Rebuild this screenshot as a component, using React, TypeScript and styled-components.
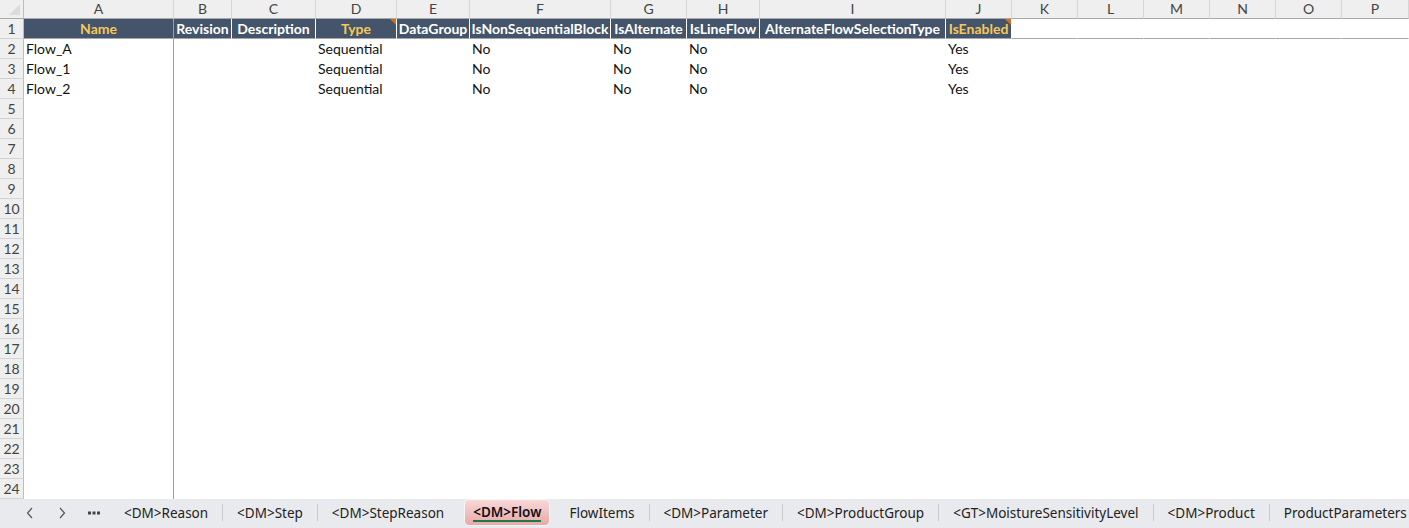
import React from "react";
import styled, { createGlobalStyle, css } from "styled-components";

const Global = createGlobalStyle`
  html, body { margin: 0; padding: 0; background: #fff; overflow: hidden; }
  #root { width: 1409px; height: 528px; }
`;

const COLS = [
  { l: "A", w: 150 },
  { l: "B", w: 58 },
  { l: "C", w: 84 },
  { l: "D", w: 81 },
  { l: "E", w: 73 },
  { l: "F", w: 141 },
  { l: "G", w: 76 },
  { l: "H", w: 73 },
  { l: "I", w: 186 },
  { l: "J", w: 66 },
  { l: "K", w: 66 },
  { l: "L", w: 66 },
  { l: "M", w: 66 },
  { l: "N", w: 66 },
  { l: "O", w: 66 },
  { l: "P", w: 67 },
];

const HEADERS: { t: string; gold?: boolean; note?: boolean }[] = [
  { t: "Name", gold: true },
  { t: "Revision" },
  { t: "Description" },
  { t: "Type", gold: true, note: true },
  { t: "DataGroup" },
  { t: "IsNonSequentialBlock" },
  { t: "IsAlternate" },
  { t: "IsLineFlow" },
  { t: "AlternateFlowSelectionType" },
  { t: "IsEnabled", gold: true, note: true },
];

const DATA: string[][] = [
  ["Flow_A", "", "", "Sequential", "", "No", "No", "No", "", "Yes"],
  ["Flow_1", "", "", "Sequential", "", "No", "No", "No", "", "Yes"],
  ["Flow_2", "", "", "Sequential", "", "No", "No", "No", "", "Yes"],
];

const TABS = [
  "<DM>Reason",
  "<DM>Step",
  "<DM>StepReason",
  "<DM>Flow",
  "FlowItems",
  "<DM>Parameter",
  "<DM>ProductGroup",
  "<GT>MoistureSensitivityLevel",
  "<DM>Product",
  "ProductParameters",
];
const ACTIVE = 3;

const Page = styled.div`
  width: 1409px;
  height: 528px;
  display: flex;
  flex-direction: column;
  font-family: "Lato", "Liberation Sans", sans-serif;
  overflow: hidden;
`;

const Sheet = styled.div`
  display: grid;
  grid-template-columns: 24px ${COLS.map((c) => c.w + "px").join(" ")};
  grid-template-rows: 19px repeat(24, 20px);
  flex: 0 0 499px;
  overflow: hidden;
`;

const Corner = styled.div`
  background: #efefef;
  border-right: 1px solid #bdbdbd;
  border-bottom: 1px solid #a9a9a9;
  box-sizing: border-box;
  position: relative;
  &::after {
    content: "";
    position: absolute;
    right: 3px;
    bottom: 3px;
    width: 0;
    height: 0;
    border-left: 11px solid transparent;
    border-bottom: 11px solid #dcdcdc;
  }
`;

const ColHead = styled.div`
  background: #efefef;
  box-sizing: border-box;
  border-right: 1px solid #d6d6d6;
  border-bottom: 1px solid #a9a9a9;
  color: #444;
  font-size: 14px;
  line-height: 18px;
  text-align: center;
`;

const RowHead = styled.div`
  background: #efefef;
  box-sizing: border-box;
  border-right: 1px solid #bdbdbd;
  border-bottom: 1px solid #d4d4d4;
  color: #444;
  font-size: 14px;
  line-height: 19px;
  text-align: center;
`;

const HeadCell = styled.div<{ $filled: boolean; $gold?: boolean; $note?: boolean; $freeze?: boolean }>`
  box-sizing: border-box;
  position: relative;
  border-bottom: 1px solid #a6a6a6;
  border-right: 1px solid ${(p) => (p.$freeze ? "#9e9e9e" : p.$filled ? "#ffffff" : "transparent")};
  background: ${(p) => (p.$filled ? "#44546a" : "#ffffff")};
  color: ${(p) => (p.$gold ? "#f6c857" : "#ffffff")};
  font-weight: 700;
  font-size: 14px;
  line-height: 19px;
  text-align: center;
  white-space: nowrap;
  overflow: hidden;
  ${(p) =>
    p.$note &&
    css`
      &::after {
        content: "";
        position: absolute;
        top: 0;
        right: 0;
        width: 0;
        height: 0;
        border-left: 6px solid transparent;
        border-top: 6px solid #d86b16;
      }
    `}
`;

const DataCell = styled.div<{ $freeze?: boolean }>`
  box-sizing: border-box;
  border-right: 1px solid ${(p) => (p.$freeze ? "#9e9e9e" : "transparent")};
  color: #111;
  font-size: 14px;
  line-height: 20px;
  padding-left: 2px;
  white-space: nowrap;
  overflow: visible;
`;

const TabBar = styled.div`
  flex: 1;
  display: flex;
  align-items: center;
  background: #e9eaed;
  padding: 0 0 2px 14px;
  font-family: "Noto Sans", "Open Sans", sans-serif;
  font-size: 13.5px;
  color: #222;
  white-space: nowrap;
  overflow: hidden;
  & > * {
    flex-shrink: 0;
  }
`;

const NavBtn = styled.div`
  width: 32px;
  height: 27px;
  display: flex;
  align-items: center;
  justify-content: center;
  color: #555;
`;

const Tab = styled.div<{ $active?: boolean }>`
  height: 27px;
  display: flex;
  align-items: center;
  padding: 0 14px;
  position: relative;
  box-sizing: border-box;
  ${(p) =>
    p.$active &&
    css`
      padding: 0 8px 1px;
      margin: 0 4px 0 5px;
      border-radius: 5px;
      border: 1px solid #f6f6f6;
      background: linear-gradient(#f8d8d8, #e9a8a8);
      color: #111;
      font-weight: 600;
      &::after {
        content: "";
        position: absolute;
        left: 8px;
        right: 8px;
        bottom: 3px;
        height: 2px;
        background: #1c7a48;
      }
    `}
`;

const Sep = styled.div<{ $hidden?: boolean }>`
  width: 1px;
  height: 17px;
  background: ${(p) => (p.$hidden ? "transparent" : "#c9cacd")};
`;

const Chevron = ({ dir }: { dir: "l" | "r" }) => (
  <svg width="8" height="12" viewBox="0 0 8 12">
    <path
      d={dir === "l" ? "M6 1 L1.5 6 L6 11" : "M2 1 L6.5 6 L2 11"}
      fill="none"
      stroke="#555"
      strokeWidth="1.2"
    />
  </svg>
);

const Dots = () => (
  <svg width="12" height="4" viewBox="0 0 12 4">
    <rect x="0" y="0.5" width="3" height="3" fill="#444" />
    <rect x="4.5" y="0.5" width="3" height="3" fill="#444" />
    <rect x="9" y="0.5" width="3" height="3" fill="#444" />
  </svg>
);

export default function App() {
  const rows: React.ReactNode[] = [];
  for (let r = 2; r <= 24; r++) {
    const vals = DATA[r - 2] || [];
    rows.push(<RowHead key={"rh" + r}>{r}</RowHead>);
    COLS.forEach((c, i) => {
      rows.push(
        <DataCell key={r + c.l} $freeze={i === 0}>
          {vals[i] || ""}
        </DataCell>
      );
    });
  }

  return (
    <Page>
      <Global />
      <Sheet>
        <Corner />
        {COLS.map((c) => (
          <ColHead key={c.l}>{c.l}</ColHead>
        ))}
        <RowHead>1</RowHead>
        {COLS.map((c, i) => {
          const h = HEADERS[i];
          return (
            <HeadCell key={"h" + c.l} $filled={!!h} $gold={h?.gold} $note={h?.note} $freeze={i === 0}>
              {h?.t}
            </HeadCell>
          );
        })}
        {rows}
      </Sheet>
      <TabBar>
        <NavBtn>
          <Chevron dir="l" />
        </NavBtn>
        <NavBtn>
          <Chevron dir="r" />
        </NavBtn>
        <NavBtn>
          <Dots />
        </NavBtn>
        {TABS.map((t, i) => (
          <React.Fragment key={t}>
            {i > 0 && <Sep $hidden={i === ACTIVE || i === ACTIVE + 1} />}
            <Tab $active={i === ACTIVE}>{t}</Tab>
          </React.Fragment>
        ))}
      </TabBar>
    </Page>
  );
}
